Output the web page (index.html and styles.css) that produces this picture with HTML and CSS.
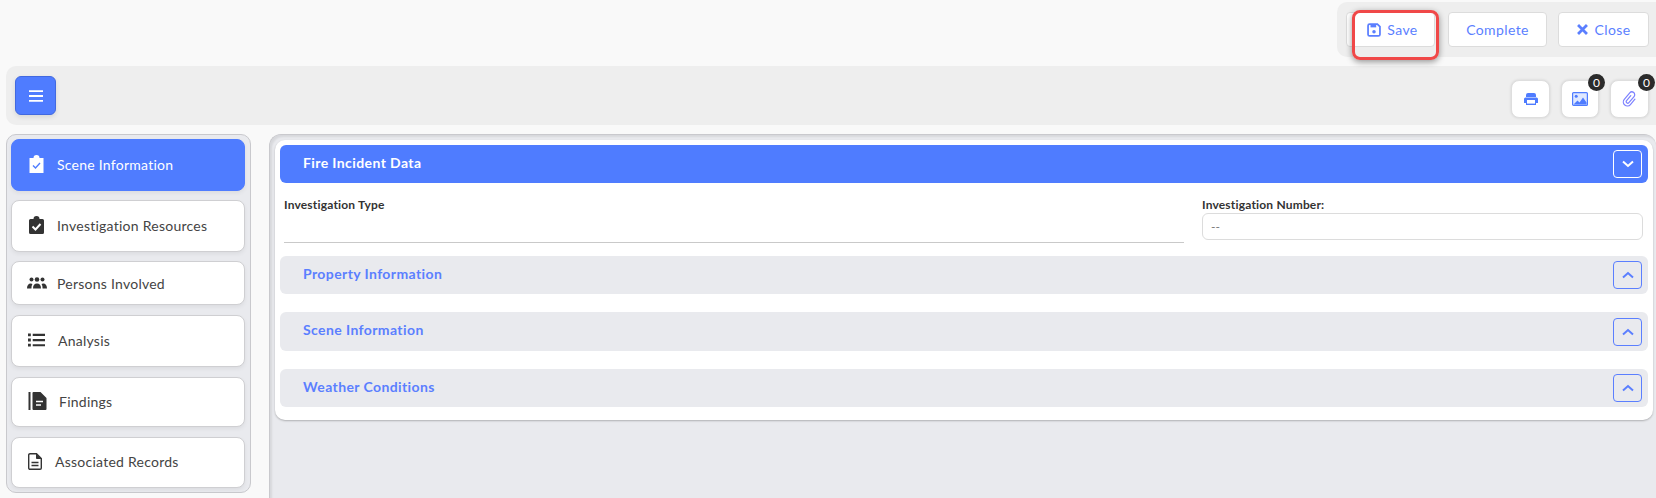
FILE: index.html
```html
<!DOCTYPE html>
<html lang="en">
<head>
    <meta charset="UTF-8">
    <title>Fire Incident Data</title>
    <link rel="stylesheet" href="styles.css">
</head>
<body>
    <div class="top-row">
        <div class="action-bar">
            <button class="btn btn-save">
                <svg class="btn-icon" viewBox="0 0 16 16"><path d="M3 1.200h8.800L14.800 4.200V13a1.800 1.800 0 0 1-1.800 1.800H3A1.800 1.800 0 0 1 1.200 13V3A1.800 1.800 0 0 1 3 1.200z" fill="none" stroke="currentColor" stroke-width="2"/><rect x="4" y="2" width="6.500" height="3" fill="currentColor"/><circle cx="8" cy="10" r="2" fill="currentColor"/></svg>
                Save
            </button>
            <button class="btn btn-complete">Complete</button>
            <button class="btn btn-close">
                <svg class="btn-icon" viewBox="0 0 16 16"><path d="M2.500 2.500l11 11M13.500 2.500l-11 11" fill="none" stroke="currentColor" stroke-width="3.400"/></svg>
                Close
            </button>
            <div class="highlight"></div>
        </div>
    </div>

    <div class="tool-bar">
        <button class="menu-btn">
            <svg viewBox="0 0 14 12" width="14" height="12"><path d="M0 1.200h14M0 6h14M0 10.800h14" stroke="#fff" stroke-width="1.800"/></svg>
        </button>
        <div class="tools">
            <button class="tool-btn">
                <svg viewBox="0 0 14 12" width="14" height="12"><path d="M4 0h6a2 2 0 0 1 2 2v2H2V2a2 2 0 0 1 2-2zM1.500 4.500h11A1.500 1.500 0 0 1 14 6v4h-2v2H2v-2H0V6a1.500 1.500 0 0 1 1.500-1.500z" fill="currentColor"/><rect x="3" y="7" width="8" height="3.600" fill="#fff"/></svg>
            </button>
            <button class="tool-btn tool-image">
                <svg viewBox="0 0 16 14" width="16" height="14"><rect x="0.600" y="0.600" width="14.800" height="12.800" rx="1" fill="#dfe8ff" stroke="currentColor" stroke-width="1.200"/><circle cx="4.200" cy="4.200" r="1.500" fill="currentColor"/><path d="M1.500 12.500l4-4 2 2 3.500-5 3.500 5v2z" fill="currentColor"/></svg>
                <span class="badge">0</span>
            </button>
            <button class="tool-btn">
                <svg viewBox="0 0 16 16" width="16" height="16"><path d="M6.500 5v6.500a1.500 1.500 0 0 0 3 0V3.500a2.800 2.800 0 0 0-5.600 0v8.500a4 4 0 0 0 8 0V5" transform="rotate(40 8 8)" fill="none" stroke="#7d82ff" stroke-width="1.200" stroke-linecap="round"/></svg>
                <span class="badge">0</span>
            </button>
        </div>
    </div>

    <div class="content">
        <div class="sidebar">
            <a class="side-item active">
                <svg class="side-icon" viewBox="0 0 16 18"><path d="M1 3h4a3 3 0 0 1 6 0h4v15H1z" fill="currentColor"/><path d="M4.500 10.500l2.500 2.500 4.500-5" fill="none" stroke="#4f7cff" stroke-width="1.400"/></svg>
                <span>Scene Information</span>
            </a>
            <a class="side-item">
                <svg class="side-icon" viewBox="0 0 16 18"><path d="M2 3h3a3 3 0 0 1 6 0h3a1.500 1.500 0 0 1 1.500 1.500V16.500A1.500 1.500 0 0 1 14 18H2A1.500 1.500 0 0 1 .5 16.500V4.500A1.500 1.500 0 0 1 2 3z" fill="currentColor"/><path d="M4 10.500l3 3 5-5.500" fill="none" stroke="#fff" stroke-width="2"/></svg>
                <span>Investigation Resources</span>
            </a>
            <a class="side-item item-persons">
                <svg class="side-icon icon-wide" viewBox="0 0 20 12"><circle cx="4.500" cy="2.500" r="2" fill="currentColor"/><circle cx="10" cy="2.500" r="2.300" fill="currentColor"/><circle cx="15.500" cy="2.500" r="2" fill="currentColor"/><path d="M0 11.500c0-3 1.300-5 3.800-5 .7 0 1.200.2 1.600.5-.7 1.300-1 2.800-1 4.500zM6 11.500c0-3.200 1.500-5 4-5s4 1.800 4 5zM15.600 11.500c0-1.700-.3-3.200-1-4.500.4-.3.900-.5 1.600-.5 2.500 0 3.800 2 3.800 5z" fill="currentColor"/></svg>
                <span>Persons Involved</span>
            </a>
            <a class="side-item">
                <svg class="side-icon icon-list" viewBox="0 0 18 14"><path d="M0 0h3v3H0zM0 5.500h3v3H0zM0 11h3v3H0zM5 .5h13v2.200H5zM5 6h13v2.200H5zM5 11.500h13v2.200H5z" fill="currentColor"/></svg>
                <span>Analysis</span>
            </a>
            <a class="side-item item-findings">
                <svg class="side-icon icon-findings" viewBox="0 0 18 18"><path d="M0 0h2v18H0zM4 1a1 1 0 0 1 1-1h7l6 6v11a1 1 0 0 1-1 1H5a1 1 0 0 1-1-1z" fill="currentColor"/><path d="M7.500 9.500h7M7.500 13h5" stroke="#fff" stroke-width="1.600"/></svg>
                <span>Findings</span>
            </a>
            <a class="side-item item-records">
                <svg class="side-icon icon-file" viewBox="0 0 14 17"><path d="M2 .7h6.500l4.800 4.800V15a1.300 1.300 0 0 1-1.300 1.300H2A1.300 1.300 0 0 1 .7 15V2A1.300 1.300 0 0 1 2 .7z" fill="none" stroke="currentColor" stroke-width="1.400"/><path d="M8.500 1v4.500H13" fill="currentColor" stroke="currentColor"/><path d="M3.500 9.500h7M3.500 12.500h7" stroke="currentColor" stroke-width="1.300"/></svg>
                <span>Associated Records</span>
            </a>
        </div>

        <div class="main">
            <div class="panel">
                <div class="section-head open">
                    <span>Fire Incident Data</span>
                    <button class="toggle">
                        <svg viewBox="0 0 12 8" width="12" height="8"><path d="M1 1.500l5 4.500 5-4.500" fill="none" stroke="currentColor" stroke-width="2"/></svg>
                    </button>
                </div>
                <div class="fields">
                    <div class="field field-type">
                        <label>Investigation Type</label>
                    </div>
                    <div class="field field-number">
                        <label>Investigation Number:</label>
                        <div class="input">--</div>
                    </div>
                </div>
                <div class="section-head">
                    <span>Property Information</span>
                    <button class="toggle">
                        <svg viewBox="0 0 12 8" width="12" height="8"><path d="M1 6.500l5-4.500 5 4.500" fill="none" stroke="currentColor" stroke-width="2"/></svg>
                    </button>
                </div>
                <div class="section-head section-tall">
                    <span>Scene Information</span>
                    <button class="toggle">
                        <svg viewBox="0 0 12 8" width="12" height="8"><path d="M1 6.500l5-4.500 5 4.500" fill="none" stroke="currentColor" stroke-width="2"/></svg>
                    </button>
                </div>
                <div class="section-head">
                    <span>Weather Conditions</span>
                    <button class="toggle">
                        <svg viewBox="0 0 12 8" width="12" height="8"><path d="M1 6.500l5-4.500 5 4.500" fill="none" stroke="currentColor" stroke-width="2"/></svg>
                    </button>
                </div>
            </div>
        </div>
    </div>
</body>
</html>
```

FILE: styles.css
```css
* { margin: 0; padding: 0; box-sizing: border-box; }
html, body { height: 498px; overflow: hidden; }
body { font-family: "Lato", sans-serif; background: #f9f9f9; color: #333; }
button { font-family: inherit; cursor: pointer; }

/* Top actions */
.top-row { display: flex; justify-content: flex-end; height: 66px; padding-top: 2px; }
.action-bar { position: relative; display: flex; width: 319px; height: 55px; padding: 10px 7px 0 9px; background: #eeeeee; border-radius: 10px 0 0 10px; }
.btn { display: flex; align-items: center; justify-content: center; gap: 6px; height: 35px; background: #fff; border: 1px solid #dcdcdc; border-radius: 4px; color: #5b7fff; font-size: 14px; letter-spacing: 0.4px; }
.btn-icon { width: 14px; height: 14px; }
.btn-save { width: 89px; padding-left: 4px; }
.btn-complete { width: 99px; margin-left: 13px; }
.btn-close { width: 91px; margin-left: 11px; gap: 5px; }
.btn-close .btn-icon { width: 13px; height: 13px; }
.highlight { position: absolute; left: 15px; top: 8px; width: 87px; height: 50px; border: 3px solid #f04848; border-radius: 8px; box-shadow: 0 2px 6px rgba(0, 0, 0, 0.4); }

/* Second bar */
.tool-bar { display: flex; justify-content: space-between; height: 59px; margin-left: 6px; padding: 10px 7px 0 9px; background: #eeeeee; border-radius: 10px 0 0 10px; }
.menu-btn { display: flex; align-items: center; justify-content: center; width: 41px; height: 39px; background: #4f7cff; border: 1px solid #4169e0; border-radius: 6px; box-shadow: 0 2px 5px rgba(0, 0, 0, 0.1); }
.tools { display: flex; gap: 11px; padding-top: 4px; }
.tool-btn { position: relative; display: flex; align-items: center; justify-content: center; width: 39px; height: 38px; background: #fff; border: 1px solid #dedede; border-radius: 8px; color: #4f7cff; box-shadow: 0 0 3px rgba(0, 0, 0, 0.12); }
.tool-image { width: 38px; }
.badge { position: absolute; top: -7px; right: -7px; width: 17px; height: 17px; border-radius: 50%; background: #2b2b2b; color: #fff; font-size: 12px; line-height: 17px; text-align: center; }

/* Content */
.content { display: flex; margin-top: 9px; }

.sidebar { display: flex; flex-direction: column; gap: 10px; width: 245px; height: 359px; margin-left: 6px; padding: 4px 5px 0 4px; background: #e9eaee; border: 1px solid #c9c9cd; border-radius: 10px; }
.side-item { display: flex; align-items: center; flex: none; height: 52px; padding: 0 0 2px 16px; background: #fff; border: 1px solid #cfcfd2; border-radius: 8px; font-size: 14px; letter-spacing: 0.25px; color: #444; box-shadow: 0 2px 4px rgba(0, 0, 0, 0.06); }
.side-item:nth-child(-n+2) { margin-bottom: -1px; }
.side-item.active { background: #4f7cff; border-color: #4f7cff; color: #fff; }
.item-persons { height: 44px; padding-bottom: 0; }
.item-findings { height: 50px; }
.item-records { height: 51px; }
.side-icon { flex: none; width: 17px; height: 18px; margin-right: 12px; color: #333; }
.active .side-icon { color: #fff; }
.icon-wide { width: 20px; height: 12px; margin-left: -1px; margin-right: 10px; }
.icon-list { height: 14px; margin-right: 13px; }
.icon-findings { width: 19px; margin-right: 12px; }
.icon-file { width: 14px; height: 17px; margin-right: 13px; }

.main { flex: 1; height: 364px; margin-left: 18px; padding: 5px 3px 0 5px; background: #e9eaee; border: 0 solid #c9c9cd; border-width: 1px 0 0 1px; border-radius: 12px 12px 0 0; box-shadow: inset 2px 2px 2px rgba(0, 0, 0, 0.08); }
.panel { height: 280px; padding: 5px 5px 0 5px; background: #fff; border-radius: 10px; box-shadow: 0 1px 2px rgba(0, 0, 0, 0.25); }

.section-head { display: flex; align-items: center; justify-content: space-between; height: 38px; margin-bottom: 18px; padding: 0 6px 0 23px; background: #e9eaee; border-radius: 6px; color: #5b7fff; font-size: 14px; font-weight: 700; letter-spacing: 0.4px; }
.section-head span { margin-bottom: 4px; }
.section-tall { height: 39px; }
.section-head.open { margin-bottom: 0; background: #4f7cff; color: #fff; }
.toggle { display: flex; align-items: center; justify-content: center; width: 29px; height: 28px; background: transparent; border: 1px solid #5b7fff; border-radius: 4px; color: #5b7fff; }
.open .toggle { border-color: #fff; color: #fff; }

.fields { display: flex; gap: 18px; height: 73px; padding: 14px 0 0 4px; }
.field label { display: block; font-size: 12px; font-weight: 700; letter-spacing: 0.18px; color: #333; line-height: 16px; }
.field-type { flex: none; width: 900px; height: 46px; border-bottom: 1px solid #c9c9c9; }
.field-number { flex: none; width: 441px; }
.input { height: 27px; padding-left: 8px; border: 1px solid #dcdcdc; border-radius: 6px; font-size: 12px; line-height: 25px; color: #777; }
```
